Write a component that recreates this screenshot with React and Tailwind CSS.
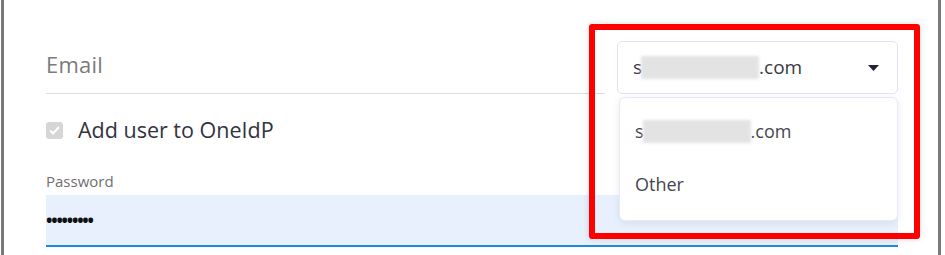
import React from 'react';

function Blur({ w }) {
  return <span className={`inline-block h-[23px] bg-[#e3e3e3] blur-[1.5px] align-middle ${w}`} />;
}

export default function App() {
  return (
    <div className="relative w-[945px] h-[255px] bg-white overflow-hidden font-['Open_Sans',sans-serif]">
      <div className="absolute left-[1px] top-0 h-full w-[3px] bg-[#7a7a7a]" />
      <div className="absolute left-[938px] top-0 h-full w-[3px] bg-[#7a7a7a]" />

      <div className="pl-[46px] pr-[47px] pt-[40px]">
        {/* email row */}
        <div className="flex items-end">
          <div className="flex-1 border-b border-[#dedede] h-[54px] flex items-center pb-[4px]">
            <span className="text-[22px] text-[#7b7b7b] tracking-[0.2px]">Email</span>
          </div>
          <div className="relative w-[281px] ml-[12px]">
            <div className="h-[53px] rounded-[5px] border border-[#dfe5f7] flex items-center pl-[15px] pr-[18px]">
              <span className="text-[19px] text-[#3a3a45] flex items-center">
                s<Blur w="w-[118px] -ml-[1px]" />.com
              </span>
              <svg className="ml-auto" width="11" height="6" viewBox="0 0 11 6">
                <path d="M0 0h11L5.5 6z" fill="#222230" />
              </svg>
            </div>
            <div className="absolute left-[2px] right-0 top-[56px] h-[124px] bg-white rounded-[6px] border border-[#e6eaf8] shadow-[0_2px_8px_rgba(0,0,0,0.08)] flex flex-col pl-[15px] text-[18px] text-[#45454f]">
              <div className="h-[34px] mt-[16px] flex items-center">
                s<Blur w="w-[108px] -ml-[1px]" />.com
              </div>
              <div className="h-[34px] mt-[19px] flex items-center">Other</div>
            </div>
          </div>
        </div>

        {/* checkbox */}
        <div className="flex items-center mt-[20px]">
          <div className="w-[17px] h-[17px] rounded-[3px] bg-[#d6d6d6] flex items-center justify-center">
            <svg width="11" height="9" viewBox="0 0 11 9">
              <path d="M1 4.5l3 3L10 1" stroke="#fff" strokeWidth="2" fill="none" />
            </svg>
          </div>
          <span className="ml-[15px] text-[21.5px] text-[#333340]">Add user to OneIdP</span>
        </div>

        {/* password */}
        <div className="mt-[28px] text-[15px] text-[#6f6f6f] leading-none">Password</div>
        <div className="mt-[6px] h-[52px] bg-[#e8f0fe] border-b-2 border-[#1e88e5] flex items-center">
          <span className="text-[17px] text-[#111] tracking-[-1.2px] font-bold leading-none">•••••••••</span>
        </div>
      </div>

      {/* highlight */}
      <div className="absolute left-[589px] top-[24px] w-[331px] h-[215px] border-[6px] border-[#ff0000] rounded-[3px] shadow-[0_0_6px_rgba(0,0,0,0.15)]" />
    </div>
  );
}
